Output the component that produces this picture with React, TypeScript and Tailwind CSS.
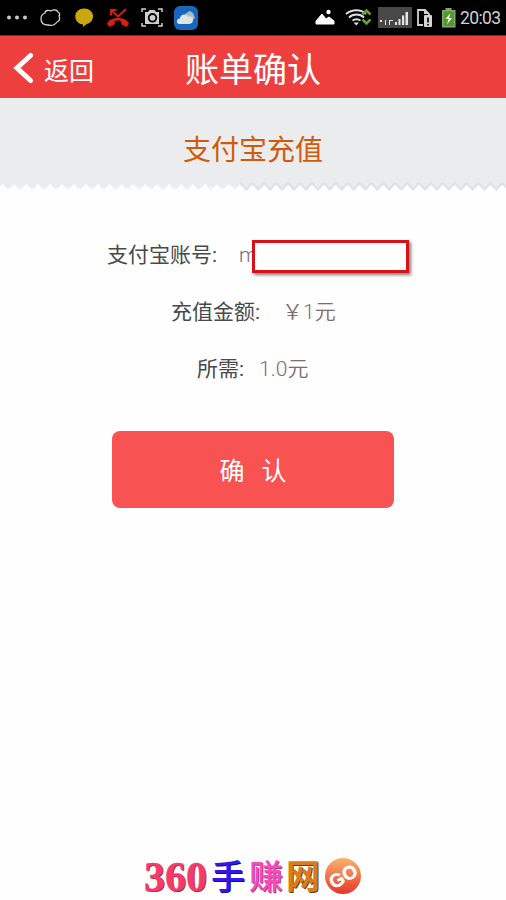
import React from 'react';

const rows = [
  { label: '充值金额:', value: '￥1元', className: 'pl-[171px] gap-[22px]' },
  { label: '所需:', value: '1.0元', className: 'pl-[197px] gap-[15px]' },
];

const StatusBar: React.FC = () => (
  <div className="h-[35px] bg-black">
    <svg width="506" height="35" viewBox="0 0 506 35" fill="none">
      {/* Notification icons */}
      <g fill="#c8c8c8">
        <circle cx="9" cy="17.500" r="2" />
        <circle cx="17" cy="17.500" r="2" />
        <circle cx="25" cy="17.500" r="2" />
      </g>
      <path d="M45 13c0-3 4-3 6-2 3-2 6-1 7 1 2 1 2 3 1 4 1 2 1 5-2 6-2 3-5 4-9 3-4 0-7-2-7-6 0-2 1-5 4-6z" stroke="#d0d0d0" strokeWidth="1.300" />
      <path d="M84.500 8.500a8.500 8 0 0 1 2 15.800c-1 .4-1.500 1.500-3.500 2.700v-2.500A8.500 8 0 0 1 84.500 8.500z" fill="#c9a80d" />
      <g stroke="#d42013">
        <path d="M111 15.500V10h5.500M111.500 10.500l6.500 6 8-7.500" strokeWidth="1.900" />
        <path d="M107 24c2-8 20-8 22 0l-2.500 3-5-2.500-.5-3.500c-2-.6-4-.6-6 0l-.5 3.500-5 2.500z" fill="#d42013" stroke="none" />
      </g>
      <g stroke="#d0d0d0" strokeWidth="1.500">
        <path d="M142 12V9h4M158 9h4v3M162 23v3h-4M146 26h-4v-3" />
        <path d="M145 12h3l1.500-2h5l1.500 2h3v12h-14z" fill="#d0d0d0" stroke="none" />
        <circle cx="152.500" cy="17.800" r="3.800" stroke="#000" strokeWidth="1.900" />
      </g>
      <rect x="174" y="6" width="24" height="24" rx="6" fill="#1767bd" />
      <path d="M185 14l5-3 3 2 2 5-5 4z" fill="#aeb9c2" />
      <path d="M179 24c-3-1-3-5 1-5.500 0-4 6-5.500 8-2 3-.5 5.500 1 5 4 0 2-2 3.500-4 3.500z" fill="#e0e3e5" />

      {/* System icons */}
      <path d="M316 24v-3l6-7 4 5 3-2 5 4v3z" fill="#fff" stroke="#fff" strokeLinejoin="round" />
      <circle cx="328.500" cy="12" r="2.200" fill="#fff" />
      <g stroke="#e0e0e0" strokeWidth="1.900">
        <path d="M346 14c6-5 15-5 20 0M349 17.500c4-4 11-4 15 0M352.500 20.700c2-2 6-2 8 0" />
        <path d="M353.500 22.500h5.500l-2.700 3z" fill="#e0e0e0" stroke="none" />
      </g>
      <path d="M362.500 14.500l4-4 4 4M362.500 19.500l4 4 4-4" stroke="#64a52d" strokeWidth="2.500" />
      <rect x="378" y="7" width="34" height="21" fill="#484848" />
      <g fill="#e6e6e6">
        <path d="M380 20h2v2h-2zM385 20h1v5h-1zM389 20h1v5h-1zM390 20h3v1h-3z" />
        <path d="M395 22h2v3h-2zM398.500 19h2v6h-2zM402 15.500h2.200v9.500h-2.200zM405.500 12h2.500v13h-2.500z" />
      </g>
      <path d="M418 10h7l4 4v2M418 9v16h5" stroke="#cfcfcf" strokeWidth="1.800" />
      <path d="M424 9l5 5h-5z" fill="#cfcfcf" />
      <rect x="424" y="15" width="8" height="12" rx="1" fill="#d6d6d6" />
      <path d="M427 17.500h2v5h-2zM427 24h2v1.500h-2z" fill="#222" />
      <path d="M445.500 8h6v2h4v17.500h-13.500V10h3.500z" fill="#88a56e" />
      <path d="M443.500 11.500h10.500v14.500h-10.500z" fill="#4f9a2c" />
      <path d="M450.500 13l-5 6h3l-1.500 5.500 5-6.500h-3z" fill="#f0f6ec" />
      <text x="460" y="24" fill="#d0d0d0" fontSize="17.500" fontFamily="Roboto, sans-serif" textLength="41">20:03</text>
    </svg>
  </div>
);

const Header: React.FC = () => (
  <header className="grid h-[63px] grid-cols-[185px_1fr] items-center border-t border-[#8c2626] bg-[#ee3f3f] pt-[5px] text-white">
    <div className="flex items-center gap-[10px] pl-[13px]">
      <svg className="mb-1" width="21" height="32" viewBox="0 0 21 32" fill="none">
        <path d="M17.500 3.500L4 16l13.500 12.500" stroke="#fff" strokeWidth="5" strokeLinecap="round" />
      </svg>
      <span className="pt-1 text-[25px] leading-8">返回</span>
    </div>
    <h1 className="text-[34px] leading-10">账单确认</h1>
  </header>
);

const Banner: React.FC = () => (
  <section>
    <div className="flex h-[84px] justify-center bg-[#ebecee] pt-[33px]">
      <h2 className="text-[28px] leading-10 text-[#d05a0c]">支付宝充值</h2>
    </div>
    {/* Torn paper edge */}
    <svg className="block" width="506" height="10" viewBox="0 0 506 10">
      <defs>
        <linearGradient id="fade" x1="0" y1="0" x2="0" y2="1">
          <stop offset="0" stopColor="#ebecee" />
          <stop offset="0.500" stopColor="#ebecee" />
          <stop offset="1" stopColor="#f8f8f9" />
        </linearGradient>
        <pattern id="tear" x="2.500" width="11.900" height="10" patternUnits="userSpaceOnUse">
          <path d="M0 0h11.900v2L5.950 8.500 0 2z" fill="url(#fade)" />
        </pattern>
        <pattern id="tearLine" x="2.500" width="11.900" height="10" patternUnits="userSpaceOnUse">
          <path d="M0 1l5.950 6.500L11.900 1" fill="none" stroke="#e0e0e1" strokeWidth="2" />
        </pattern>
      </defs>
      <rect width="506" height="10" fill="url(#tear)" />
      <rect x="240" width="266" height="10" fill="url(#tearLine)" />
    </svg>
  </section>
);

const Logo: React.FC = () => (
  <footer className="flex h-[56px] items-center pl-[143px]">
    <svg width="222" height="56" viewBox="0 -8 222 56">
      <defs>
        <linearGradient id="go" x1="0" y1="0" x2="0" y2="1">
          <stop offset="0" stopColor="#f8b36d" />
          <stop offset="0.600" stopColor="#f06a45" />
          <stop offset="1" stopColor="#e5352c" />
        </linearGradient>
      </defs>
      <g fontFamily="'Liberation Serif', 'Noto Sans CJK SC', serif" fontWeight="bold">
        <text x="2" y="40" fontSize="43" fill="#8d2742" textLength="63" lengthAdjust="spacingAndGlyphs">360</text>
        <text x="1" y="39" fontSize="43" fill="#f43b6b" stroke="#f43b6b" strokeWidth="0.500" textLength="63" lengthAdjust="spacingAndGlyphs">360</text>
        <g fontSize="34">
          <text x="69" y="38" fill="#15107a" fontWeight="500">手</text>
          <text x="68" y="37" fill="#3518e8" fontWeight="500">手</text>
          <text x="107" y="38" fill="#a63886" fontWeight="500">赚</text>
          <text x="106" y="37" fill="#f54dbb" fontWeight="500">赚</text>
          <text x="144" y="38" fill="#663c10">网</text>
          <text x="143" y="37" fill="#dc7c18">网</text>
        </g>
      </g>
      <circle cx="200" cy="24" r="18" fill="url(#go)" />
      <text x="200" y="31" fontSize="19" fontWeight="bold" fill="#fff" stroke="#fff" strokeWidth="0.500" textAnchor="middle" fontFamily="'Liberation Sans', sans-serif" transform="rotate(-30 200 24)">GO</text>
    </svg>
  </footer>
);

const App: React.FC = () => {
  return (
    <div className="flex h-[900px] w-[506px] flex-col overflow-hidden bg-[#fefefe] font-[Roboto,'Noto_Sans_CJK_SC',sans-serif]">
      <StatusBar />
      <Header />
      <Banner />

      <main className="flex-1 pt-[35px] text-[21px] text-[#494949]">
        <div className="flex h-[57px] items-center gap-[22px] pl-[107px]">
          <span>支付宝账号:</span>
          <div className="relative font-[350] text-[#806c6f]">
            m
            <div className="absolute top-0 left-[13px] h-[33px] w-[157px] border-[3px] border-[#d81118] bg-white shadow-[2px_2px_3px_rgba(0,0,0,0.5)]" />
          </div>
        </div>
        {rows.map(row => (
          <div key={row.label} className={`flex h-[57px] items-center ${row.className}`}>
            <span>{row.label}</span>
            <span className="font-[350] text-[#806c6f]">{row.value}</span>
          </div>
        ))}
        <button className="mt-[33px] ml-[112px] flex h-[77px] w-[282px] items-center justify-center gap-[17px] rounded-lg bg-[#f95252] pt-[5px] text-[25px] text-white">
          <span>确</span>
          <span>认</span>
        </button>
      </main>

      <Logo />
    </div>
  );
};

export default App;
